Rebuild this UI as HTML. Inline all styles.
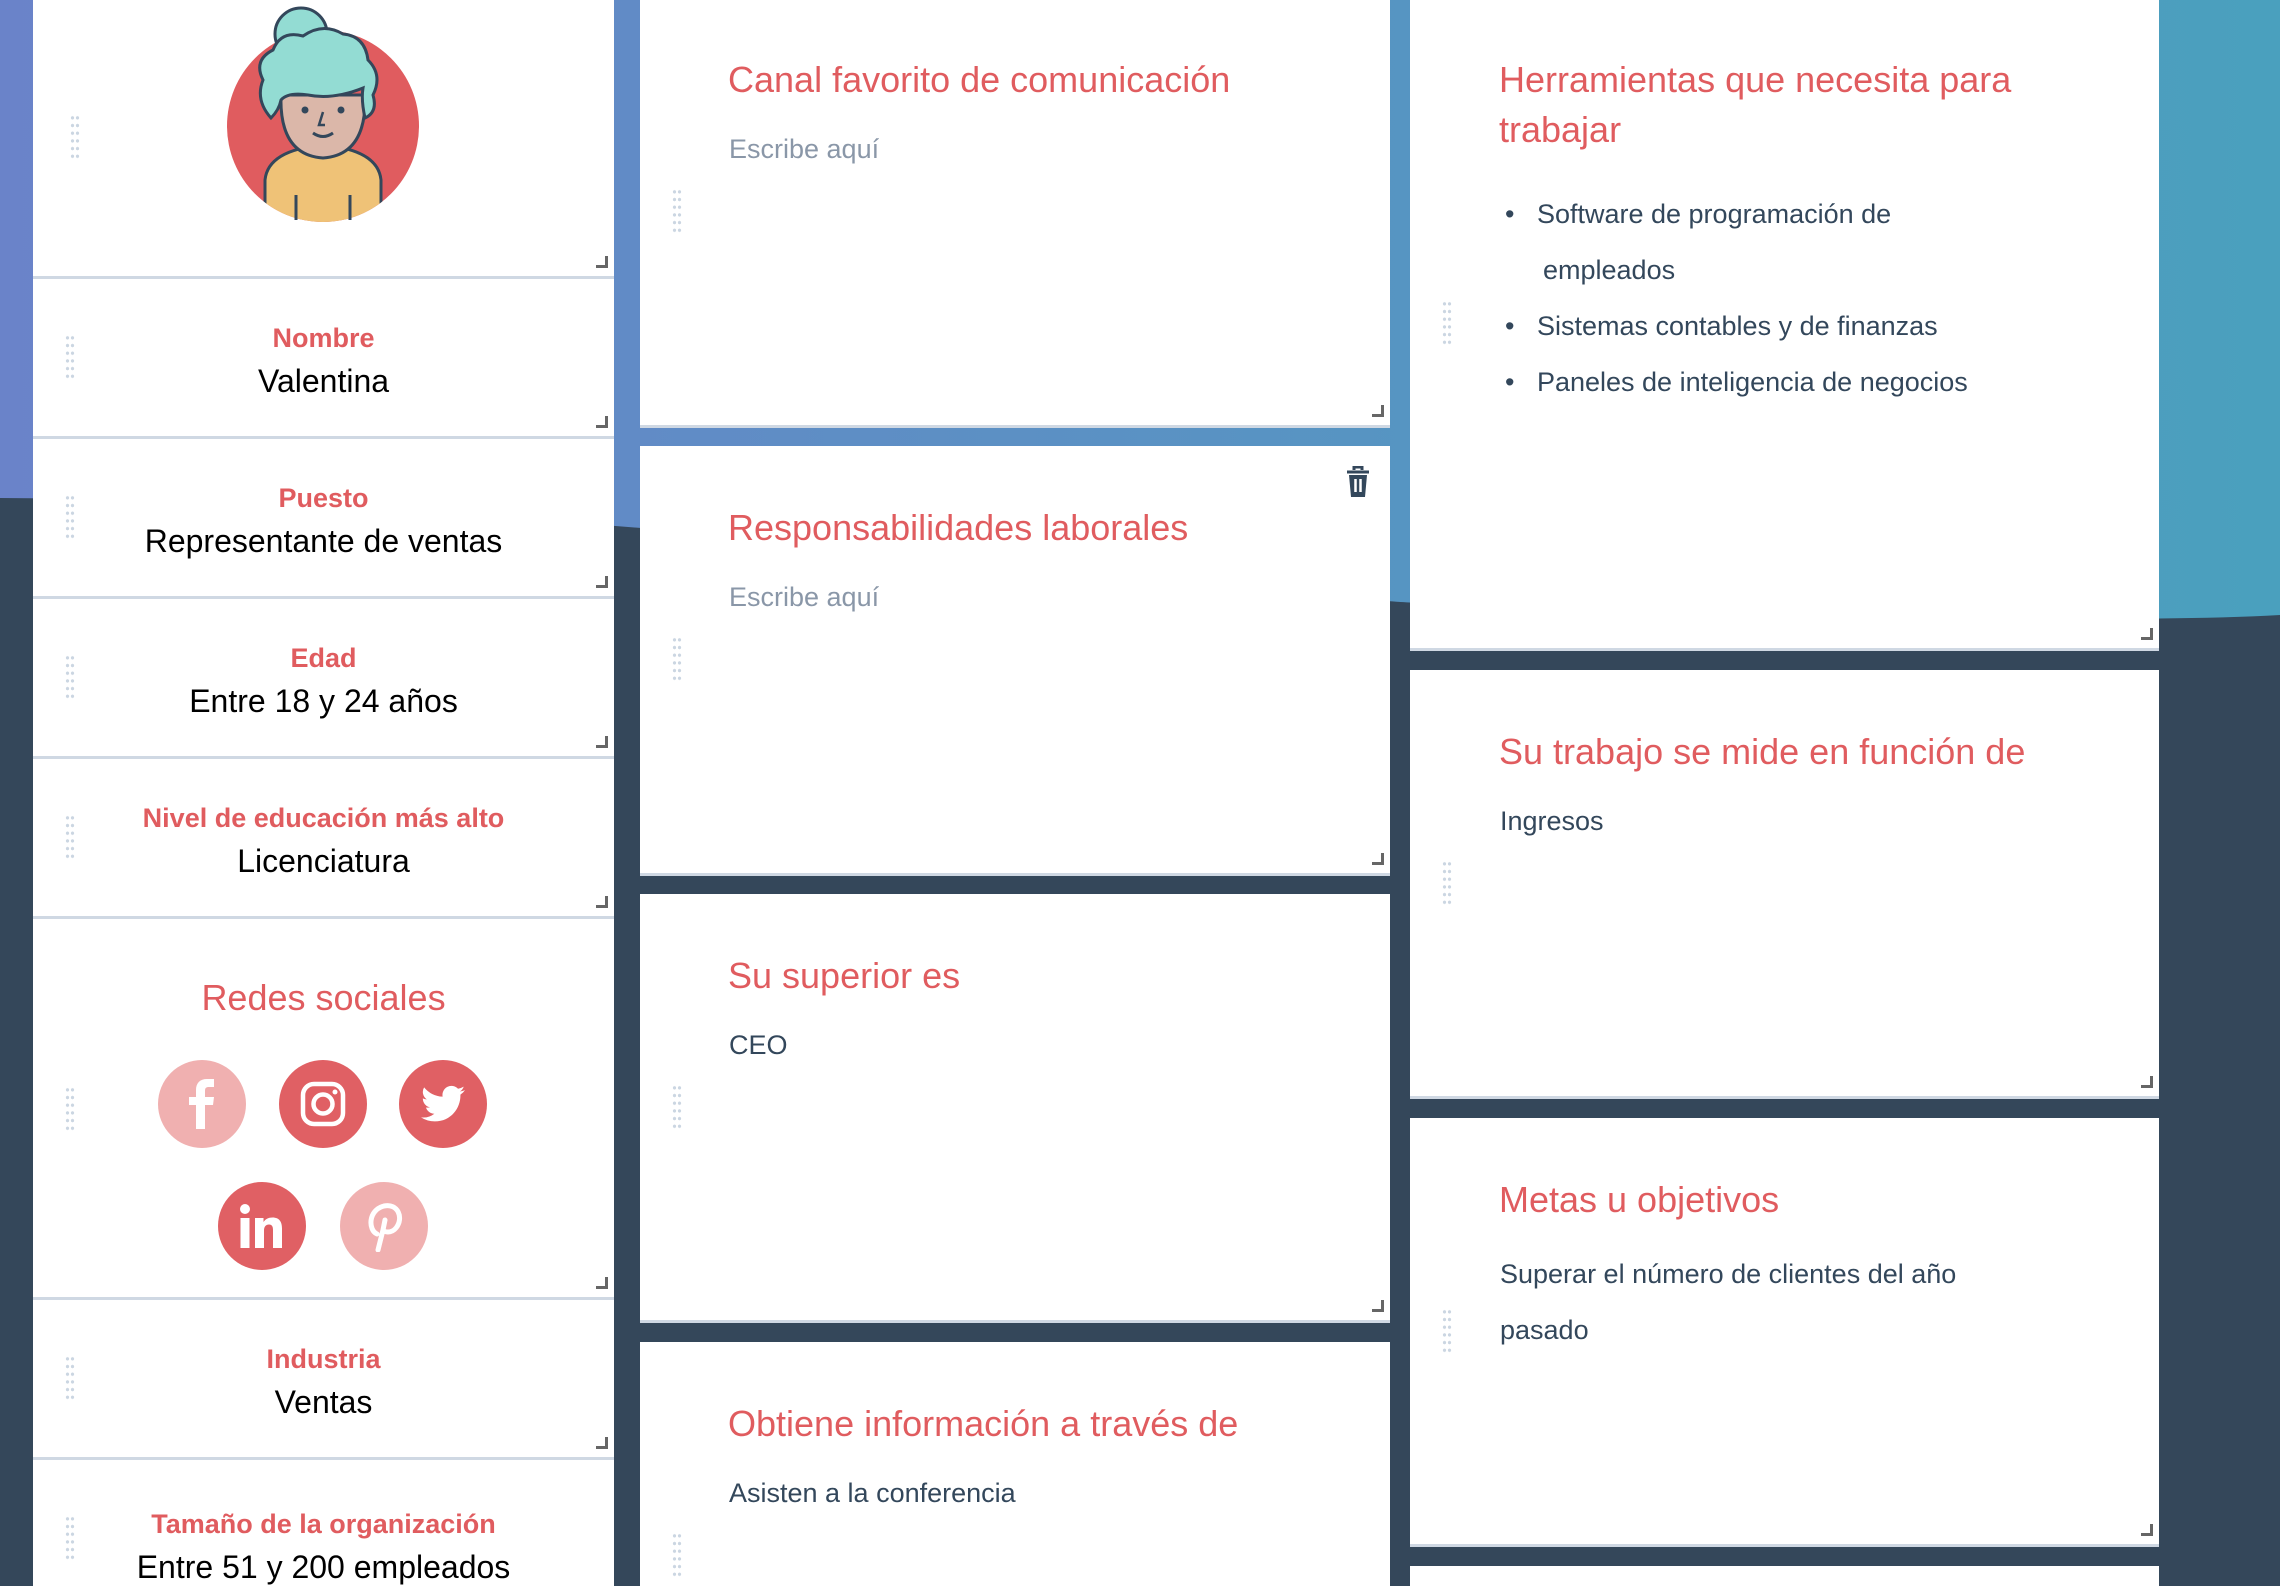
<!DOCTYPE html>
<html style="overflow:hidden;height:1586px"><head><meta charset="utf-8"><style>
*{margin:0;padding:0;box-sizing:border-box}
body{width:2280px;height:1586px;overflow:hidden;position:relative;font-family:"Liberation Sans",sans-serif;background:#34475a}
.bg{position:absolute;left:0;top:0}
.card{position:absolute;background:#fff;border-bottom:3px solid #cfd8e3}
.h{position:absolute;color:#e05c5f;font-size:36px;line-height:50px}
.b{position:absolute;color:#33475b;font-size:27px}
.ph{color:#8a97a8}
.drag{position:absolute;width:10px;height:46px;background-image:radial-gradient(circle,#cbd6e2 1.6px,transparent 1.8px);background-size:5px 7.7px}
.rz{position:absolute;right:6px;bottom:8px;width:12px;height:12px;border-right:3px solid #666;border-bottom:3px solid #666}
.cell{position:absolute;left:33px;width:581px;background:#fff;border-bottom:3px solid #cfd8e3;display:flex;flex-direction:column;align-items:center;justify-content:center;padding-top:6px}
.lab{color:#e05c5f;font-weight:bold;font-size:27px;line-height:40px}
.val{color:#000;font-size:32px;line-height:46px}
.soc{position:absolute;width:88px;height:88px;border-radius:50%;display:flex;align-items:center;justify-content:center}
.l{background:#f0b0b0}.d{background:#e06064}
ul{list-style:none}
</style></head><body>
<svg class="bg" width="2280" height="1586"><defs><linearGradient id="g" x1="0" x2="1"><stop offset="0" stop-color="#6a83c9"/><stop offset="1" stop-color="#4aa0be"/></linearGradient></defs>
<rect width="2280" height="700" fill="url(#g)"/><path d="M0 498 C600 500 1300 600 1420 603 C1800 612 2100 625 2280 615 L2280 1586 L0 1586Z" fill="#34475a"/></svg>

<!-- column 1 -->
<div class="cell" style="top:0;height:279px"><div class="drag" style="left:37px;top:114px"></div><div class="rz"></div>
<svg style="position:absolute;left:190px;top:0" width="200" height="225" viewBox="0 0 200 225">
<defs><clipPath id="c"><circle cx="100" cy="126" r="96"/></clipPath></defs>
<circle cx="100" cy="126" r="96" fill="#e05c5f"/>
<g clip-path="url(#c)"><path d="M42 225 L42 180 Q45 150 100 145 Q155 150 158 180 L158 225Z" fill="#efc277" stroke="#33475b" stroke-width="3"/></g>
<line x1="73" y1="195" x2="73" y2="220" stroke="#33475b" stroke-width="3"/><line x1="127" y1="195" x2="127" y2="220" stroke="#33475b" stroke-width="3"/>
<path d="M58 95 Q56 155 100 158 Q144 155 142 95Z" fill="#dbb7a9" stroke="#33475b" stroke-width="3"/>
<circle cx="78" cy="34" r="26" fill="#93dcd3" stroke="#33475b" stroke-width="3"/>
<path d="M48 118 Q32 100 40 80 Q30 60 50 50 Q58 30 80 36 Q100 22 120 34 Q142 36 145 60 Q160 75 150 95 Q155 112 142 118 Q138 100 140 88 Q110 100 85 95 Q65 92 58 100 Q56 110 48 118Z" fill="#93dcd3" stroke="#33475b" stroke-width="3"/>
<circle cx="82" cy="110" r="3.5" fill="#33475b"/><circle cx="118" cy="110" r="3.5" fill="#33475b"/>
<path d="M100 112 L96 125 L102 125" fill="none" stroke="#33475b" stroke-width="2.5"/>
<path d="M90 133 Q100 140 110 133" fill="none" stroke="#33475b" stroke-width="3"/>
</svg></div>
<div class="cell" style="top:279px;height:160px"><div class="drag" style="left:32px;top:55px"></div><div class="rz"></div><div class="lab">Nombre</div><div class="val">Valentina</div></div>
<div class="cell" style="top:439px;height:160px"><div class="drag" style="left:32px;top:55px"></div><div class="rz"></div><div class="lab">Puesto</div><div class="val">Representante de ventas</div></div>
<div class="cell" style="top:599px;height:160px"><div class="drag" style="left:32px;top:55px"></div><div class="rz"></div><div class="lab">Edad</div><div class="val">Entre 18 y 24 años</div></div>
<div class="cell" style="top:759px;height:160px"><div class="drag" style="left:32px;top:55px"></div><div class="rz"></div><div class="lab">Nivel de educación más alto</div><div class="val">Licenciatura</div></div>
<div class="cell" style="top:919px;height:381px;display:block"><div class="drag" style="left:32px;top:167px"></div><div class="rz"></div>
<div style="position:absolute;top:58px;width:100%;text-align:center;color:#e05c5f;font-size:36px">Redes sociales</div>
<div class="soc l" style="left:125px;top:141px"><svg width="30" height="50" viewBox="0 0 30 50"><path d="M9 50V26H2v-8h7v-7C9 4 13 0 20 0h7v8h-5c-3 0-4 1-4 4v6h9l-1 8h-8v24Z" fill="#fff"/></svg></div>
<div class="soc d" style="left:246px;top:141px"><svg width="48" height="48" viewBox="0 0 48 48"><rect x="4" y="4" width="40" height="40" rx="11" fill="none" stroke="#fff" stroke-width="4.5"/><circle cx="24" cy="24" r="9.5" fill="none" stroke="#fff" stroke-width="4.5"/><circle cx="36" cy="12" r="2.5" fill="#fff"/></svg></div>
<div class="soc d" style="left:366px;top:141px"><svg width="44" height="38" viewBox="0 0 24 20"><path d="M24 2.4a10 10 0 0 1-2.8.8A5 5 0 0 0 23.3.5a10 10 0 0 1-3.1 1.2A4.9 4.9 0 0 0 11.8 6 14 14 0 0 1 1.7.9a4.9 4.9 0 0 0 1.5 6.6A4.9 4.9 0 0 1 1 6.9 4.9 4.9 0 0 0 4.9 11.8a5 5 0 0 1-2.2.1 4.9 4.9 0 0 0 4.6 3.4A9.9 9.9 0 0 1 0 17.3 14 14 0 0 0 7.5 19.5c9.1 0 14-7.5 14-14v-.6A10 10 0 0 0 24 2.4z" fill="#fff"/></svg></div>
<div class="soc d" style="left:185px;top:263px"><svg width="46" height="46" viewBox="0 0 46 46"><circle cx="6" cy="6" r="5" fill="#fff"/><rect x="1.5" y="15" width="9" height="30" fill="#fff"/><path d="M16 15h8.5v4c2-3 5-4.5 9-4.5 7 0 9.5 4.5 9.5 11V45h-9V27c0-3.5-1-5.5-4-5.5s-5 2-5 6V45h-9Z" fill="#fff"/></svg></div>
<div class="soc l" style="left:307px;top:263px"><svg width="40" height="52" viewBox="0 0 40 52"><path d="M14 50 L19 30 M13 34 C4 30 4 10 20 6 C34 3 40 18 32 28 C27 34 20 32 19 30 L21 20" fill="none" stroke="#fff" stroke-width="5" stroke-linecap="round"/></svg></div>
</div>
<div class="cell" style="top:1300px;height:160px"><div class="drag" style="left:32px;top:55px"></div><div class="rz"></div><div class="lab">Industria</div><div class="val">Ventas</div></div>
<div class="cell" style="top:1460px;height:126px;justify-content:flex-start;padding-top:44px;border-bottom:none"><div class="drag" style="left:32px;top:55px"></div><div class="lab">Tamaño de la organización</div><div class="val">Entre 51 y 200 empleados</div></div>

<!-- column 2 -->
<div class="card" style="left:640px;top:0;width:750px;height:428px"><div class="drag" style="left:32px;top:188px"></div><div class="rz"></div>
<div class="h" style="left:88px;top:55px">Canal favorito de comunicación</div><div class="b ph" style="left:89px;top:134px">Escribe aquí</div></div>
<div class="card" style="left:640px;top:446px;width:750px;height:430px"><div class="drag" style="left:32px;top:190px"></div><div class="rz"></div>
<svg style="position:absolute;left:706px;top:20px" width="24" height="32" viewBox="0 0 24 32"><path d="M8 4V1h8v3M1 6h22" stroke="#33475b" stroke-width="3" fill="none"/><path d="M3 9h18l-2 22H5Z" fill="#33475b"/><path d="M9.5 13v13M14.5 13v13" stroke="#fff" stroke-width="2.5"/></svg>
<div class="h" style="left:88px;top:57px">Responsabilidades laborales</div><div class="b ph" style="left:89px;top:136px">Escribe aquí</div></div>
<div class="card" style="left:640px;top:894px;width:750px;height:429px"><div class="drag" style="left:32px;top:190px"></div><div class="rz"></div>
<div class="h" style="left:88px;top:57px">Su superior es</div><div class="b" style="left:89px;top:136px">CEO</div></div>
<div class="card" style="left:640px;top:1342px;width:750px;height:244px;border-bottom:none"><div class="drag" style="left:32px;top:190px"></div>
<div class="h" style="left:88px;top:57px">Obtiene información a través de</div><div class="b" style="left:89px;top:136px">Asisten a la conferencia</div></div>

<!-- column 3 -->
<div class="card" style="left:1410px;top:0;width:749px;height:651px"><div class="drag" style="left:32px;top:300px"></div><div class="rz"></div>
<div class="h" style="left:89px;top:55px;width:600px">Herramientas que necesita para trabajar</div>
<ul class="b" style="left:95px;top:186px;line-height:56px">
<li>•&nbsp;&nbsp;&nbsp;Software de programación de</li><li style="padding-left:38px">empleados</li><li>•&nbsp;&nbsp;&nbsp;Sistemas contables y de finanzas</li><li>•&nbsp;&nbsp;&nbsp;Paneles de inteligencia de negocios</li></ul></div>
<div class="card" style="left:1410px;top:670px;width:749px;height:429px"><div class="drag" style="left:32px;top:190px"></div><div class="rz"></div>
<div class="h" style="left:89px;top:57px">Su trabajo se mide en función de</div><div class="b" style="left:90px;top:136px">Ingresos</div></div>
<div class="card" style="left:1410px;top:1118px;width:749px;height:429px"><div class="drag" style="left:32px;top:190px"></div><div class="rz"></div>
<div class="h" style="left:89px;top:57px">Metas u objetivos</div>
<div class="b" style="left:90px;top:128px;line-height:56px;width:520px">Superar el número de clientes del año pasado</div></div>
<div class="card" style="left:1410px;top:1566px;width:749px;height:20px;border-bottom:none"></div>
</body></html>
